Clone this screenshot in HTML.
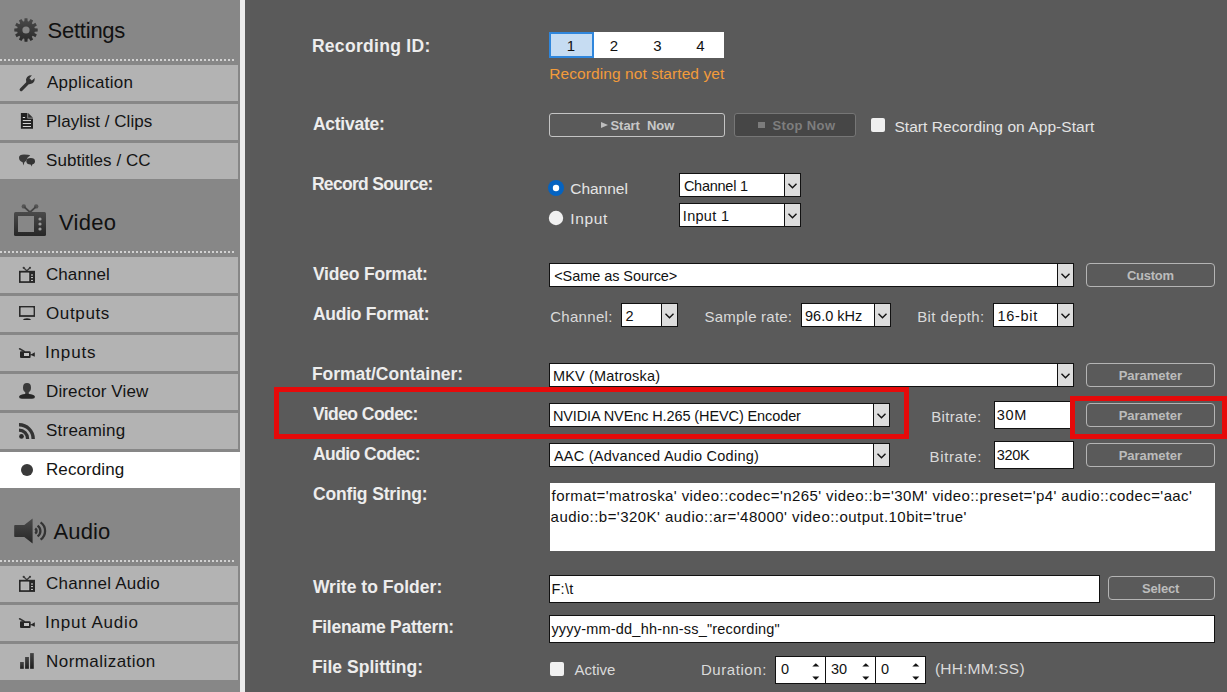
<!DOCTYPE html>
<html><head><meta charset="utf-8"><style>
html,body{margin:0;padding:0}
body{width:1227px;height:692px;overflow:hidden;position:relative;background:#5a5a5a;font-family:"Liberation Sans", sans-serif}
.t{position:absolute;white-space:pre}
</style></head><body>
<div style="position:absolute;left:0px;top:0px;width:240px;height:692px;background:#878787"></div>
<div style="position:absolute;left:240px;top:0px;width:5px;height:692px;background:#ececec"></div>
<div style="position:absolute;left:14px;top:18px;line-height:0"><svg width="24" height="24" viewBox="0 0 24 24"><defs><linearGradient id="gg" x1="0" y1="0" x2="0" y2="1"><stop offset="0" stop-color="#4a4a4a"/><stop offset="1" stop-color="#2a2a2a"/></linearGradient></defs><path fill="url(#gg)" fill-rule="evenodd" d="M10.33,3.26 L10.52,0.29 L13.48,0.29 L13.67,3.26 L14.93,3.60 L16.57,1.12 L19.13,2.60 L17.82,5.26 L18.74,6.18 L21.40,4.87 L22.88,7.43 L20.40,9.07 L20.74,10.33 L23.71,10.52 L23.71,13.48 L20.74,13.67 L20.40,14.93 L22.88,16.57 L21.40,19.13 L18.74,17.82 L17.82,18.74 L19.13,21.40 L16.57,22.88 L14.93,20.40 L13.67,20.74 L13.48,23.71 L10.52,23.71 L10.33,20.74 L9.07,20.40 L7.43,22.88 L4.87,21.40 L6.18,18.74 L5.26,17.82 L2.60,19.13 L1.12,16.57 L3.60,14.93 L3.26,13.67 L0.29,13.48 L0.29,10.52 L3.26,10.33 L3.60,9.07 L1.12,7.43 L2.60,4.87 L5.26,6.18 L6.18,5.26 L4.87,2.60 L7.43,1.12 L9.07,3.60Z M8.4,12 a3.6,3.6 0 1,0 7.2,0 a3.6,3.6 0 1,0 -7.2,0Z"/></svg></div>
<div class="t" style="left:47.60px;top:19.82px;font-size:22px;line-height:22px;color:#111;letter-spacing:-0.247px;">Settings</div>
<div style="position:absolute;left:0px;top:59px;width:236px;height:2px;background:repeating-linear-gradient(90deg,#d2d2d2 0 2px,transparent 2px 4px)"></div>
<div style="position:absolute;left:0px;top:65px;width:238px;height:36px;background:#b3b3b3"></div>
<div style="position:absolute;left:19px;top:75px;line-height:0"><svg width="16" height="16" viewBox="0 0 16 16" style="overflow:visible"><path d="M2.2 14.6 L8.6 8.2" stroke="#333" stroke-width="3.2" stroke-linecap="round"/><path d="M7.0 4.2 Q7.6 1.6 10.2 0.6 L12.9 0.2 L10.4 3.3 L12.8 5.5 L15.8 3.0 Q16.0 6.2 14.0 8.0 Q11.6 9.6 8.8 9.0 Q6.6 7.2 7.0 4.2 Z" fill="#333"/></svg></div>
<div class="t" style="left:47.00px;top:73.61px;font-size:17px;line-height:17px;color:#141414;letter-spacing:0.280px;">Application</div>
<div style="position:absolute;left:0px;top:104px;width:238px;height:36px;background:#b3b3b3"></div>
<div style="position:absolute;left:19px;top:114px;line-height:0"><svg width="16" height="16" viewBox="0 0 16 16" style="overflow:visible"><path d="M1.9 -1.1 L8.4 -1.1 L8.4 4.5 L14 4.5 L14 14.8 L1.9 14.8 Z" fill="#222"/><path d="M9.1 -1.1 L14 3.8 L9.1 3.8 Z" fill="#333"/><rect x="3.8" y="3" width="2.3" height="1" fill="#ddd"/><rect x="3.8" y="6.1" width="8.2" height="0.95" fill="#ddd"/><rect x="3.8" y="9.05" width="8.2" height="0.95" fill="#ddd"/><rect x="3.8" y="12" width="8.2" height="0.95" fill="#ddd"/></svg></div>
<div class="t" style="left:46.00px;top:112.61px;font-size:17px;line-height:17px;color:#141414;letter-spacing:0.024px;">Playlist / Clips</div>
<div style="position:absolute;left:0px;top:143px;width:238px;height:36px;background:#b3b3b3"></div>
<div style="position:absolute;left:19px;top:153px;line-height:0"><svg width="16" height="16" viewBox="0 0 16 16" style="overflow:visible"><path d="M0 4.6 Q0 1.6 5 1.6 Q9.8 1.6 11.2 2.6 Q8 4 7.4 7.6 L5.4 9.2 L4.4 12.6 L3.6 9.2 Q0 8.4 0 4.6Z" fill="#3a3a3a"/><ellipse cx="11.7" cy="8.2" rx="4.3" ry="3.2" fill="#333"/><path d="M11.3 10.6 L12.6 13.6 L13.6 10.6Z" fill="#333"/></svg></div>
<div class="t" style="left:46.00px;top:151.61px;font-size:17px;line-height:17px;color:#141414;letter-spacing:0.050px;">Subtitles / CC</div>
<div style="position:absolute;left:14px;top:204px;line-height:0"><svg width="32" height="32" viewBox="0 0 32 32"><defs><linearGradient id="tg" x1="0" y1="0" x2="0" y2="1"><stop offset="0" stop-color="#4a4a4a"/><stop offset="1" stop-color="#262626"/></linearGradient></defs>
<circle cx="9.8" cy="2.4" r="2.2" fill="#555"/><circle cx="22.2" cy="2.4" r="2.2" fill="#555"/>
<path d="M10.2 2.8 L16 8.2 L21.8 2.8" stroke="#444" stroke-width="1.8" fill="none"/>
<rect x="0" y="8" width="32" height="24" rx="1.5" fill="url(#tg)"/>
<rect x="4" y="12" width="16" height="16" fill="#878787"/>
<circle cx="26" cy="15" r="1.6" fill="#999"/><circle cx="26" cy="20" r="1.6" fill="#999"/><circle cx="26" cy="25" r="1.6" fill="#999"/></svg></div>
<div class="t" style="left:59.00px;top:211.68px;font-size:22px;line-height:22px;color:#111;letter-spacing:0.250px;">Video</div>
<div style="position:absolute;left:0px;top:251px;width:236px;height:2px;background:repeating-linear-gradient(90deg,#d2d2d2 0 2px,transparent 2px 4px)"></div>
<div style="position:absolute;left:0px;top:257px;width:238px;height:36px;background:#b3b3b3"></div>
<div style="position:absolute;left:19px;top:267px;line-height:0"><svg width="16" height="16" viewBox="0 0 16 16" style="overflow:visible"><circle cx="4.7" cy="0.8" r="1.1" fill="#3a3a3a"/><circle cx="11" cy="0.8" r="1.1" fill="#3a3a3a"/><path d="M4.9 1 L7.8 3.8 L10.8 1" stroke="#3a3a3a" stroke-width="1.2" fill="none"/><rect x="0" y="3.8" width="16" height="12.1" fill="#262626"/><rect x="1.9" y="5.9" width="8.1" height="8.1" fill="#b3b3b3" stroke="#ccc" stroke-width="0.4"/><rect x="12" y="7.2" width="2" height="1.6" fill="#9a9a9a"/><rect x="12" y="10" width="2" height="1.1" fill="#bbb"/><rect x="12" y="12.9" width="2" height="1.1" fill="#bbb"/></svg></div>
<div class="t" style="left:46.00px;top:265.61px;font-size:17px;line-height:17px;color:#141414;letter-spacing:0.069px;">Channel</div>
<div style="position:absolute;left:0px;top:296px;width:238px;height:36px;background:#b3b3b3"></div>
<div style="position:absolute;left:19px;top:306px;line-height:0"><svg width="16" height="16" viewBox="0 0 16 16" style="overflow:visible"><rect x="0" y="0" width="16" height="10.9" fill="#2a2a2a"/><rect x="1.9" y="1.8" width="12.3" height="7.1" fill="#b3b3b3" stroke="#ccc" stroke-width="0.4"/><path d="M3.8 13.9 Q4.5 12.2 8 12.2 Q11.5 12.2 12.2 13.9 Z" fill="#1e1e1e"/></svg></div>
<div class="t" style="left:46.00px;top:304.61px;font-size:17px;line-height:17px;color:#141414;letter-spacing:0.631px;">Outputs</div>
<div style="position:absolute;left:0px;top:335px;width:238px;height:36px;background:#b3b3b3"></div>
<div style="position:absolute;left:19px;top:345px;line-height:0"><svg width="16" height="16" viewBox="0 0 16 16" style="overflow:visible"><path d="M0.6 3.8 L5.3 6.4" stroke="#333" stroke-width="1.6" stroke-linecap="round"/><rect x="1" y="6.2" width="10.6" height="6.7" rx="1" fill="#262626"/><rect x="5" y="8" width="5" height="3" fill="#c4c4c4"/><path d="M11.4 8.6 L12.4 9.2 L15.8 7.2 L15.8 11.8 L12.4 10.2 L11.4 10.6 Z" fill="#262626"/></svg></div>
<div class="t" style="left:45.00px;top:343.61px;font-size:17px;line-height:17px;color:#141414;letter-spacing:0.840px;">Inputs</div>
<div style="position:absolute;left:0px;top:374px;width:238px;height:36px;background:#b3b3b3"></div>
<div style="position:absolute;left:19px;top:384px;line-height:0"><svg width="16" height="16" viewBox="0 0 16 16" style="overflow:visible"><path d="M8 -0.9 Q12 -0.9 12 3.4 Q12 7.2 9.8 8 L9.8 10.4 L6.2 10.4 L6.2 8 Q4 7.2 4 3.4 Q4 -0.9 8 -0.9Z" fill="#3a3a3a"/><path d="M0 12.8 Q0.4 10.9 4 10.2 Q8 9.5 12 10.2 Q15.6 10.9 16 12.8 Q16 14.7 13.2 14.7 L2.8 14.7 Q0 14.7 0 12.8 Z" fill="#262626"/></svg></div>
<div class="t" style="left:46.00px;top:382.61px;font-size:17px;line-height:17px;color:#141414;letter-spacing:0.125px;">Director View</div>
<div style="position:absolute;left:0px;top:413px;width:238px;height:36px;background:#b3b3b3"></div>
<div style="position:absolute;left:19px;top:423px;line-height:0"><svg width="16" height="16" viewBox="0 0 16 16" style="overflow:visible"><circle cx="2.5" cy="13.4" r="2.35" fill="#2a2a2a"/><path d="M0 7.1 A8.7 8.7 0 0 1 8.6 15.9" stroke="#333" stroke-width="3.3" fill="none"/><path d="M0 1.75 A14.1 14.1 0 0 1 14.2 15.9" stroke="#333" stroke-width="3.4" fill="none"/></svg></div>
<div class="t" style="left:46.00px;top:421.61px;font-size:17px;line-height:17px;color:#141414;letter-spacing:0.219px;">Streaming</div>
<div style="position:absolute;left:0px;top:452px;width:240px;height:36px;background:#ffffff"></div>
<div style="position:absolute;left:19px;top:462px;line-height:0"><svg width="16" height="16" viewBox="0 0 16 16" style="overflow:visible"><circle cx="8" cy="8" r="6" fill="#3a3a3a"/></svg></div>
<div class="t" style="left:46.00px;top:460.61px;font-size:17px;line-height:17px;color:#141414;letter-spacing:0.094px;">Recording</div>
<div style="position:absolute;left:14px;top:518px;line-height:0"><svg width="34" height="28" viewBox="0 0 34 28"><defs><linearGradient id="sg" x1="0" y1="0" x2="0" y2="1"><stop offset="0" stop-color="#4a4a4a"/><stop offset="1" stop-color="#262626"/></linearGradient></defs>
<path d="M1 7.1 L10.3 7.1 L18.6 0.4 L18.6 25.5 L10.3 18.9 L1 18.9 Q0.2 18.9 0.2 18 L0.2 8 Q0.2 7.1 1 7.1 Z" fill="url(#sg)"/>
<path d="M21.2 10.4 A3.2 3.2 0 0 1 21.2 15.6" stroke="#333" stroke-width="2.5" fill="none"/>
<path d="M23.6 7.6 A6.6 6.6 0 0 1 23.6 18.4" stroke="#333" stroke-width="2.3" fill="none"/>
<path d="M26.6 4.4 A10.5 10.5 0 0 1 26.6 21.6" stroke="#333" stroke-width="2.3" fill="none"/></svg></div>
<div class="t" style="left:53.60px;top:520.94px;font-size:22px;line-height:22px;color:#111;letter-spacing:0.075px;">Audio</div>
<div style="position:absolute;left:0px;top:560px;width:236px;height:2px;background:repeating-linear-gradient(90deg,#d2d2d2 0 2px,transparent 2px 4px)"></div>
<div style="position:absolute;left:0px;top:566px;width:238px;height:36px;background:#b3b3b3"></div>
<div style="position:absolute;left:19px;top:576px;line-height:0"><svg width="16" height="16" viewBox="0 0 16 16" style="overflow:visible"><circle cx="4.7" cy="0.8" r="1.1" fill="#3a3a3a"/><circle cx="11" cy="0.8" r="1.1" fill="#3a3a3a"/><path d="M4.9 1 L7.8 3.8 L10.8 1" stroke="#3a3a3a" stroke-width="1.2" fill="none"/><rect x="0" y="3.8" width="16" height="12.1" fill="#262626"/><rect x="1.9" y="5.9" width="8.1" height="8.1" fill="#b3b3b3" stroke="#ccc" stroke-width="0.4"/><rect x="12" y="7.2" width="2" height="1.6" fill="#9a9a9a"/><rect x="12" y="10" width="2" height="1.1" fill="#bbb"/><rect x="12" y="12.9" width="2" height="1.1" fill="#bbb"/></svg></div>
<div class="t" style="left:46.00px;top:574.61px;font-size:17px;line-height:17px;color:#141414;letter-spacing:0.264px;">Channel Audio</div>
<div style="position:absolute;left:0px;top:605px;width:238px;height:36px;background:#b3b3b3"></div>
<div style="position:absolute;left:19px;top:615px;line-height:0"><svg width="16" height="16" viewBox="0 0 16 16" style="overflow:visible"><path d="M0.6 3.8 L5.3 6.4" stroke="#333" stroke-width="1.6" stroke-linecap="round"/><rect x="1" y="6.2" width="10.6" height="6.7" rx="1" fill="#262626"/><rect x="5" y="8" width="5" height="3" fill="#c4c4c4"/><path d="M11.4 8.6 L12.4 9.2 L15.8 7.2 L15.8 11.8 L12.4 10.2 L11.4 10.6 Z" fill="#262626"/></svg></div>
<div class="t" style="left:45.00px;top:613.61px;font-size:17px;line-height:17px;color:#141414;letter-spacing:0.800px;">Input Audio</div>
<div style="position:absolute;left:0px;top:644px;width:238px;height:36px;background:#b3b3b3"></div>
<div style="position:absolute;left:19px;top:654px;line-height:0"><svg width="16" height="16" viewBox="0 0 16 16" style="overflow:visible"><defs><linearGradient id="bg1" x1="0" y1="0" x2="0" y2="1"><stop offset="0" stop-color="#444"/><stop offset="1" stop-color="#1e1e1e"/></linearGradient></defs><rect x="1.1" y="8" width="3.7" height="6.8" fill="url(#bg1)"/><rect x="6.1" y="3" width="3.8" height="11.8" fill="url(#bg1)"/><rect x="11.1" y="-0.9" width="3.7" height="15.7" fill="url(#bg1)"/></svg></div>
<div class="t" style="left:46.00px;top:652.61px;font-size:17px;line-height:17px;color:#141414;letter-spacing:0.448px;">Normalization</div>
<div class="t" style="left:311.90px;top:37.99px;font-size:17.5px;line-height:17.5px;color:#ededed;font-weight:bold;letter-spacing:0.301px;">Recording ID:</div>
<div class="t" style="left:312.90px;top:115.99px;font-size:17.5px;line-height:17.5px;color:#ededed;font-weight:bold;letter-spacing:-0.250px;">Activate:</div>
<div class="t" style="left:311.90px;top:175.99px;font-size:17.5px;line-height:17.5px;color:#ededed;font-weight:bold;letter-spacing:-0.684px;">Record Source:</div>
<div class="t" style="left:312.90px;top:265.99px;font-size:17.5px;line-height:17.5px;color:#ededed;font-weight:bold;letter-spacing:-0.190px;">Video Format:</div>
<div class="t" style="left:312.90px;top:305.99px;font-size:17.5px;line-height:17.5px;color:#ededed;font-weight:bold;letter-spacing:-0.250px;">Audio Format:</div>
<div class="t" style="left:311.90px;top:365.99px;font-size:17.5px;line-height:17.5px;color:#ededed;font-weight:bold;letter-spacing:-0.028px;">Format/Container:</div>
<div class="t" style="left:312.90px;top:405.99px;font-size:17.5px;line-height:17.5px;color:#ededed;font-weight:bold;letter-spacing:-0.546px;">Video Codec:</div>
<div class="t" style="left:312.90px;top:445.99px;font-size:17.5px;line-height:17.5px;color:#ededed;font-weight:bold;letter-spacing:-0.546px;">Audio Codec:</div>
<div class="t" style="left:312.90px;top:485.99px;font-size:17.5px;line-height:17.5px;color:#ededed;font-weight:bold;letter-spacing:-0.145px;">Config String:</div>
<div class="t" style="left:312.90px;top:578.99px;font-size:17.5px;line-height:17.5px;color:#ededed;font-weight:bold;letter-spacing:0.023px;">Write to Folder:</div>
<div class="t" style="left:311.90px;top:618.99px;font-size:17.5px;line-height:17.5px;color:#ededed;font-weight:bold;letter-spacing:-0.284px;">Filename Pattern:</div>
<div class="t" style="left:311.90px;top:658.99px;font-size:17.5px;line-height:17.5px;color:#ededed;font-weight:bold;letter-spacing:0.022px;">File Splitting:</div>
<div style="position:absolute;left:549px;top:32px;width:175px;height:26px;background:#fff"></div>
<div style="position:absolute;left:549px;top:32px;width:45px;height:26px;background:#c6dcf2;box-sizing:border-box;border:2px solid #2f86dc"></div>
<div class="t" style="left:566.80px;top:38.10px;font-size:15px;line-height:15px;color:#111;">1</div>
<div class="t" style="left:609.80px;top:38.10px;font-size:15px;line-height:15px;color:#111;">2</div>
<div class="t" style="left:653.20px;top:38.10px;font-size:15px;line-height:15px;color:#111;">3</div>
<div class="t" style="left:696.30px;top:38.10px;font-size:15px;line-height:15px;color:#111;">4</div>
<div class="t" style="left:549.30px;top:65.68px;font-size:15.5px;line-height:15.5px;color:#f29b3a;letter-spacing:0.075px;">Recording not started yet</div>
<div style="position:absolute;left:549px;top:113px;width:176px;height:24px;box-sizing:border-box;border:1px solid #c4c4c4;border-radius:3px"></div>
<svg style="position:absolute;left:601px;top:122px" width="7" height="6"><path d="M0 0 L7 3 L0 6Z" fill="#bdbdbd"/></svg>
<div class="t" style="left:610.50px;top:118.80px;font-size:13px;line-height:13px;color:#c8c8c8;font-weight:bold;letter-spacing:-0.056px;">Start&nbsp; Now</div>
<div style="position:absolute;left:734px;top:113px;width:122px;height:24px;box-sizing:border-box;border:1px solid #767676;border-radius:3px;background:#464646"></div>
<div style="position:absolute;left:758px;top:122px;width:7px;height:6px;background:#7c7c7c"></div>
<div class="t" style="left:772.40px;top:118.80px;font-size:13px;line-height:13px;color:#7e7e7e;font-weight:bold;letter-spacing:0.389px;">Stop Now</div>
<div style="position:absolute;left:871px;top:118px;width:14px;height:14px;background:#f0f0f0;border-radius:2px"></div>
<div class="t" style="left:894.40px;top:118.88px;font-size:15.5px;line-height:15.5px;color:#e4e4e4;letter-spacing:0.064px;">Start Recording on App-Start</div>
<svg style="position:absolute;left:548px;top:180px" width="16" height="16"><circle cx="8" cy="8" r="8" fill="#0563c1"/><circle cx="8" cy="8" r="3.2" fill="#fff"/></svg>
<svg style="position:absolute;left:548px;top:210px" width="16" height="16"><circle cx="8" cy="8" r="7.2" fill="#f0f0f0"/></svg>
<div class="t" style="left:570.20px;top:180.88px;font-size:15.5px;line-height:15.5px;color:#e4e4e4;">Channel</div>
<div class="t" style="left:570.20px;top:210.88px;font-size:15.5px;line-height:15.5px;color:#e4e4e4;letter-spacing:0.675px;">Input</div>
<div style="position:absolute;left:679px;top:173px;width:122px;height:24px;background:#fff;box-sizing:border-box;border:1px solid #111"></div>
<div style="position:absolute;left:784px;top:174px;width:16px;height:22px;background:#dcdcdc;box-sizing:border-box;border-left:1px solid #111"></div>
<div style="position:absolute;left:787.5px;top:182.5px;line-height:0"><svg width="9" height="6" viewBox="0 0 9 6"><path d="M0.5 0.8 L4.5 4.8 L8.5 0.8" stroke="#111" stroke-width="1.4" fill="none"/></svg></div>
<div class="t" style="left:683.90px;top:178.73px;font-size:14.5px;line-height:14.5px;color:#111;letter-spacing:-0.256px;">Channel 1</div>
<div style="position:absolute;left:679px;top:203px;width:122px;height:24px;background:#fff;box-sizing:border-box;border:1px solid #111"></div>
<div style="position:absolute;left:784px;top:204px;width:16px;height:22px;background:#dcdcdc;box-sizing:border-box;border-left:1px solid #111"></div>
<div style="position:absolute;left:787.5px;top:212.5px;line-height:0"><svg width="9" height="6" viewBox="0 0 9 6"><path d="M0.5 0.8 L4.5 4.8 L8.5 0.8" stroke="#111" stroke-width="1.4" fill="none"/></svg></div>
<div class="t" style="left:682.80px;top:208.73px;font-size:14.5px;line-height:14.5px;color:#111;letter-spacing:0.300px;">Input 1</div>
<div style="position:absolute;left:549px;top:263px;width:525px;height:24px;background:#fff;box-sizing:border-box;border:1px solid #111"></div>
<div style="position:absolute;left:1057px;top:264px;width:16px;height:22px;background:#dcdcdc;box-sizing:border-box;border-left:1px solid #111"></div>
<div style="position:absolute;left:1060.5px;top:272.5px;line-height:0"><svg width="9" height="6" viewBox="0 0 9 6"><path d="M0.5 0.8 L4.5 4.8 L8.5 0.8" stroke="#111" stroke-width="1.4" fill="none"/></svg></div>
<div class="t" style="left:554.20px;top:268.99px;font-size:14.5px;line-height:14.5px;color:#111;letter-spacing:-0.066px;">&lt;Same as Source&gt;</div>
<div style="position:absolute;left:1086px;top:263px;width:129px;height:24px;box-sizing:border-box;border:1px solid #b4b4b4;border-radius:4px"></div>
<div class="t" style="left:1126.90px;top:269.20px;font-size:13px;line-height:13px;color:#bcbcbc;font-weight:bold;letter-spacing:-0.260px;">Custom</div>
<div class="t" style="left:550.20px;top:309.00px;font-size:15px;line-height:15px;color:#dadada;letter-spacing:0.299px;">Channel:</div>
<div style="position:absolute;left:621px;top:303px;width:57px;height:24px;background:#fff;box-sizing:border-box;border:1px solid #111"></div>
<div style="position:absolute;left:661px;top:304px;width:16px;height:22px;background:#dcdcdc;box-sizing:border-box;border-left:1px solid #111"></div>
<div style="position:absolute;left:664.5px;top:312.5px;line-height:0"><svg width="9" height="6" viewBox="0 0 9 6"><path d="M0.5 0.8 L4.5 4.8 L8.5 0.8" stroke="#111" stroke-width="1.4" fill="none"/></svg></div>
<div class="t" style="left:625.50px;top:308.73px;font-size:14.5px;line-height:14.5px;color:#111;letter-spacing:12.200px;">2</div>
<div class="t" style="left:704.50px;top:308.90px;font-size:15px;line-height:15px;color:#dadada;letter-spacing:0.227px;">Sample rate:</div>
<div style="position:absolute;left:801px;top:303px;width:90px;height:24px;background:#fff;box-sizing:border-box;border:1px solid #111"></div>
<div style="position:absolute;left:874px;top:304px;width:16px;height:22px;background:#dcdcdc;box-sizing:border-box;border-left:1px solid #111"></div>
<div style="position:absolute;left:877.5px;top:312.5px;line-height:0"><svg width="9" height="6" viewBox="0 0 9 6"><path d="M0.5 0.8 L4.5 4.8 L8.5 0.8" stroke="#111" stroke-width="1.4" fill="none"/></svg></div>
<div class="t" style="left:805.00px;top:308.73px;font-size:14.5px;line-height:14.5px;color:#111;">96.0 kHz</div>
<div class="t" style="left:917.20px;top:308.90px;font-size:15px;line-height:15px;color:#dadada;letter-spacing:0.412px;">Bit depth:</div>
<div style="position:absolute;left:993px;top:303px;width:81px;height:24px;background:#fff;box-sizing:border-box;border:1px solid #111"></div>
<div style="position:absolute;left:1057px;top:304px;width:16px;height:22px;background:#dcdcdc;box-sizing:border-box;border-left:1px solid #111"></div>
<div style="position:absolute;left:1060.5px;top:312.5px;line-height:0"><svg width="9" height="6" viewBox="0 0 9 6"><path d="M0.5 0.8 L4.5 4.8 L8.5 0.8" stroke="#111" stroke-width="1.4" fill="none"/></svg></div>
<div class="t" style="left:997.40px;top:308.73px;font-size:14.5px;line-height:14.5px;color:#111;letter-spacing:0.740px;">16-bit</div>
<div style="position:absolute;left:549px;top:363px;width:525px;height:24px;background:#fff;box-sizing:border-box;border:1px solid #111"></div>
<div style="position:absolute;left:1057px;top:364px;width:16px;height:22px;background:#dcdcdc;box-sizing:border-box;border-left:1px solid #111"></div>
<div style="position:absolute;left:1060.5px;top:372.5px;line-height:0"><svg width="9" height="6" viewBox="0 0 9 6"><path d="M0.5 0.8 L4.5 4.8 L8.5 0.8" stroke="#111" stroke-width="1.4" fill="none"/></svg></div>
<div class="t" style="left:552.90px;top:368.73px;font-size:14.5px;line-height:14.5px;color:#111;letter-spacing:0.181px;">MKV (Matroska)</div>
<div style="position:absolute;left:1086px;top:363px;width:129px;height:24px;box-sizing:border-box;border:1px solid #b4b4b4;border-radius:4px"></div>
<div class="t" style="left:1118.70px;top:369.00px;font-size:13px;line-height:13px;color:#bcbcbc;font-weight:bold;letter-spacing:-0.019px;">Parameter</div>
<div style="position:absolute;left:549px;top:403px;width:341px;height:24px;background:#fff;box-sizing:border-box;border:1px solid #111"></div>
<div style="position:absolute;left:873px;top:404px;width:16px;height:22px;background:#dcdcdc;box-sizing:border-box;border-left:1px solid #111"></div>
<div style="position:absolute;left:876.5px;top:412.5px;line-height:0"><svg width="9" height="6" viewBox="0 0 9 6"><path d="M0.5 0.8 L4.5 4.8 L8.5 0.8" stroke="#111" stroke-width="1.4" fill="none"/></svg></div>
<div class="t" style="left:552.90px;top:408.81px;font-size:14.5px;line-height:14.5px;color:#111;letter-spacing:-0.106px;">NVIDIA NVEnc H.265 (HEVC) Encoder</div>
<div class="t" style="left:931.20px;top:408.80px;font-size:15px;line-height:15px;color:#dadada;letter-spacing:0.341px;">Bitrate:</div>
<div style="position:absolute;left:994px;top:401px;width:80px;height:28px;background:#fff;box-sizing:border-box;border:1px solid #111"></div>
<div class="t" style="left:996.80px;top:407.81px;font-size:14.5px;line-height:14.5px;color:#111;letter-spacing:0.600px;">30M</div>
<div style="position:absolute;left:1086px;top:403px;width:129px;height:24px;box-sizing:border-box;border:1px solid #b4b4b4;border-radius:4px"></div>
<div class="t" style="left:1118.70px;top:408.60px;font-size:13px;line-height:13px;color:#bcbcbc;font-weight:bold;letter-spacing:-0.019px;">Parameter</div>
<div style="position:absolute;left:549px;top:443px;width:341px;height:24px;background:#fff;box-sizing:border-box;border:1px solid #111"></div>
<div style="position:absolute;left:873px;top:444px;width:16px;height:22px;background:#dcdcdc;box-sizing:border-box;border-left:1px solid #111"></div>
<div style="position:absolute;left:876.5px;top:452.5px;line-height:0"><svg width="9" height="6" viewBox="0 0 9 6"><path d="M0.5 0.8 L4.5 4.8 L8.5 0.8" stroke="#111" stroke-width="1.4" fill="none"/></svg></div>
<div class="t" style="left:553.90px;top:448.99px;font-size:14.5px;line-height:14.5px;color:#111;letter-spacing:0.258px;">AAC (Advanced Audio Coding)</div>
<div class="t" style="left:929.60px;top:448.80px;font-size:15px;line-height:15px;color:#dadada;letter-spacing:0.624px;">Bitrate:</div>
<div style="position:absolute;left:994px;top:441px;width:80px;height:28px;background:#fff;box-sizing:border-box;border:1px solid #111"></div>
<div class="t" style="left:996.80px;top:447.53px;font-size:14.5px;line-height:14.5px;color:#111;letter-spacing:-0.333px;">320K</div>
<div style="position:absolute;left:1086px;top:443px;width:129px;height:24px;box-sizing:border-box;border:1px solid #b4b4b4;border-radius:4px"></div>
<div class="t" style="left:1118.70px;top:448.60px;font-size:13px;line-height:13px;color:#bcbcbc;font-weight:bold;letter-spacing:-0.019px;">Parameter</div>
<div style="position:absolute;left:550px;top:483px;width:665px;height:68px;background:#fff"></div>
<div class="t" style="left:551.60px;top:487.90px;font-size:15px;line-height:15px;color:#111;letter-spacing:0.403px;">format='matroska' video::codec='n265' video::b='30M' video::preset='p4' audio::codec='aac'</div>
<div class="t" style="left:550.60px;top:509.00px;font-size:15px;line-height:15px;color:#111;letter-spacing:0.460px;">audio::b='320K' audio::ar='48000' video::output.10bit='true'</div>
<div style="position:absolute;left:549px;top:575px;width:551px;height:28px;background:#fff;box-sizing:border-box;border:1px solid #111"></div>
<div class="t" style="left:551.40px;top:581.73px;font-size:14.5px;line-height:14.5px;color:#111;letter-spacing:0.301px;">F:\t</div>
<div style="position:absolute;left:1108px;top:576px;width:107px;height:24px;box-sizing:border-box;border:1px solid #b4b4b4;border-radius:4px"></div>
<div class="t" style="left:1142.00px;top:581.70px;font-size:13px;line-height:13px;color:#bcbcbc;font-weight:bold;letter-spacing:-0.200px;">Select</div>
<div style="position:absolute;left:549px;top:615px;width:666px;height:28px;background:#fff;box-sizing:border-box;border:1px solid #111"></div>
<div class="t" style="left:551.40px;top:621.81px;font-size:14.5px;line-height:14.5px;color:#111;letter-spacing:0.204px;">yyyy-mm-dd_hh-nn-ss_"recording"</div>
<div style="position:absolute;left:550px;top:662px;width:14px;height:14px;background:#f0f0f0;border-radius:2px"></div>
<div class="t" style="left:574.50px;top:662.00px;font-size:15px;line-height:15px;color:#dadada;letter-spacing:0.020px;">Active</div>
<div class="t" style="left:700.90px;top:661.86px;font-size:15px;line-height:15px;color:#dadada;letter-spacing:0.575px;">Duration:</div>
<div style="position:absolute;left:775px;top:656px;width:151px;height:28px;background:#fff;box-sizing:border-box;border:1px solid #111"></div>
<div style="position:absolute;left:825px;top:657px;width:1px;height:26px;background:#111"></div>
<div style="position:absolute;left:875px;top:657px;width:1px;height:26px;background:#111"></div>
<div class="t" style="left:781.00px;top:662.23px;font-size:14.5px;line-height:14.5px;color:#111;">0</div>
<div style="position:absolute;left:812px;top:662.8px;line-height:0"><svg width="8" height="18" viewBox="0 0 8 18"><path d="M0.3 3.6 L3.8 0.2 L7.3 3.6Z" fill="#111"/><path d="M0.3 13.6 L3.8 17 L7.3 13.6Z" fill="#111"/></svg></div>
<div class="t" style="left:831.00px;top:662.23px;font-size:14.5px;line-height:14.5px;color:#111;">30</div>
<div style="position:absolute;left:862px;top:662.8px;line-height:0"><svg width="8" height="18" viewBox="0 0 8 18"><path d="M0.3 3.6 L3.8 0.2 L7.3 3.6Z" fill="#111"/><path d="M0.3 13.6 L3.8 17 L7.3 13.6Z" fill="#111"/></svg></div>
<div class="t" style="left:881.00px;top:662.23px;font-size:14.5px;line-height:14.5px;color:#111;">0</div>
<div style="position:absolute;left:912px;top:662.8px;line-height:0"><svg width="8" height="18" viewBox="0 0 8 18"><path d="M0.3 3.6 L3.8 0.2 L7.3 3.6Z" fill="#111"/><path d="M0.3 13.6 L3.8 17 L7.3 13.6Z" fill="#111"/></svg></div>
<div class="t" style="left:934.90px;top:661.38px;font-size:15.5px;line-height:15.5px;color:#dadada;letter-spacing:0.207px;">(HH:MM:SS)</div>
<div style="position:absolute;left:274px;top:387px;width:635px;height:52px;box-sizing:border-box;border:5px solid #e60a0a"></div>
<div style="position:absolute;left:1070px;top:396px;width:157px;height:43px;box-sizing:border-box;border:5px solid #e60a0a"></div>
</body></html>
